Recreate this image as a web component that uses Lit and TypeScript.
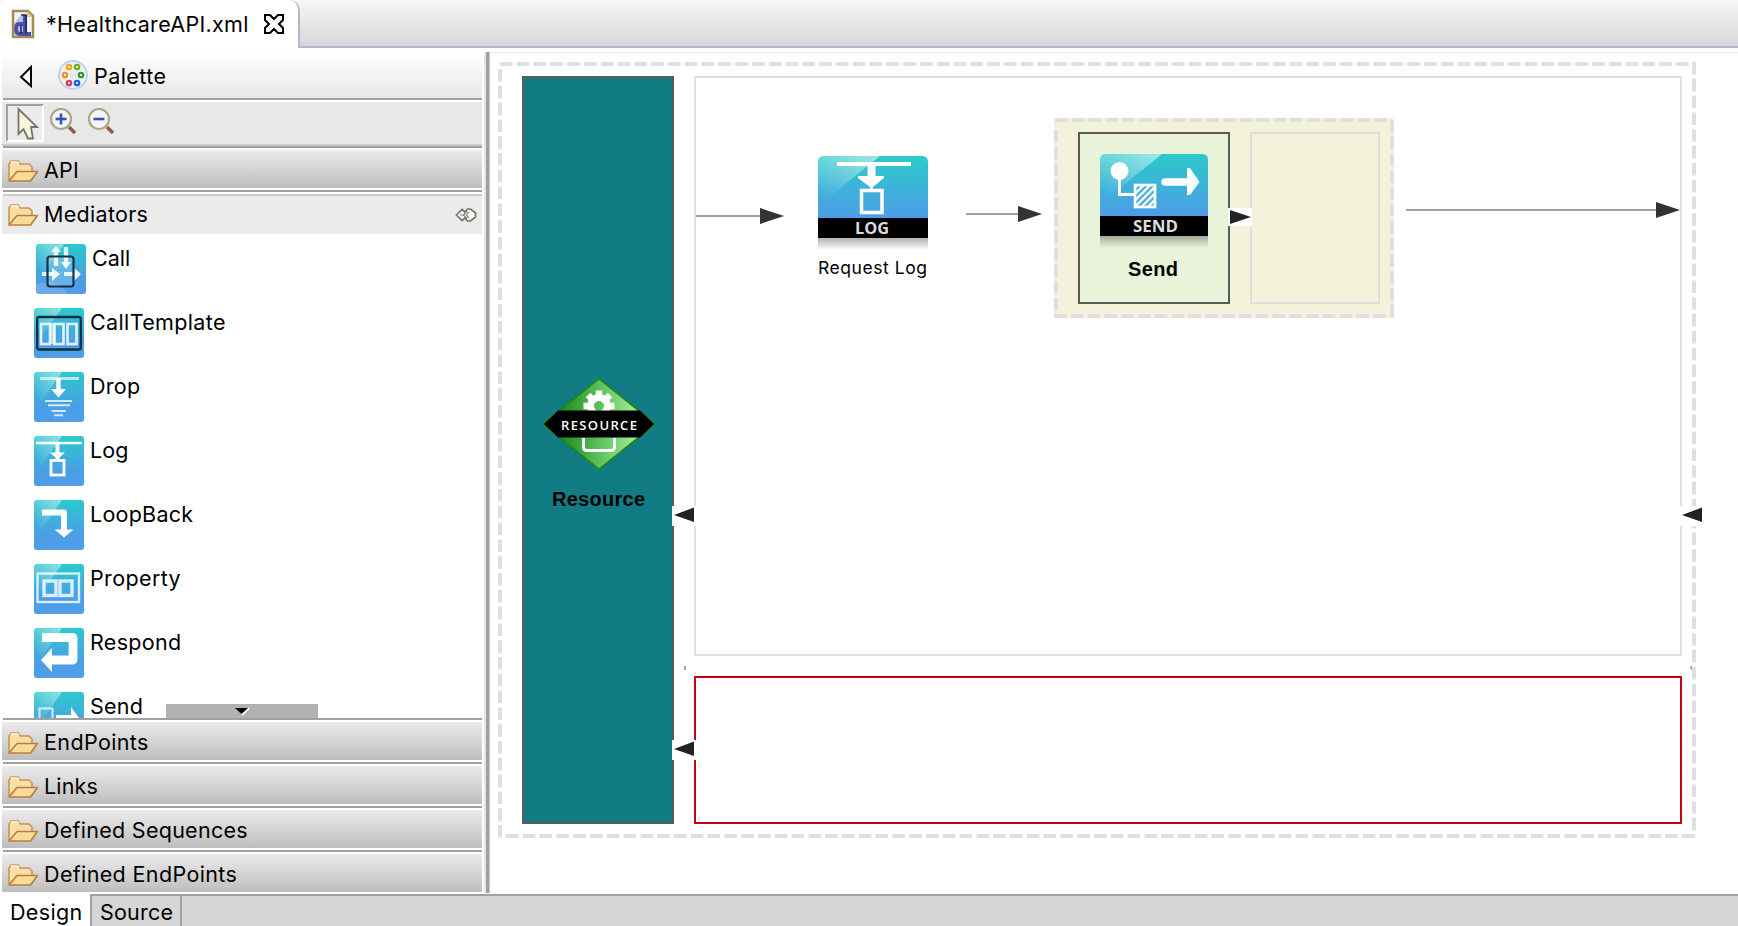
import { LitElement, html, svg, css } from "lit";
import { customElement, property } from "lit/decorators.js";

const tile = (id: string, art: unknown) => svg`
  <defs>
    <linearGradient id="t-${id}" x1="0" y1="0" x2="0" y2="1">
      <stop offset="0" stop-color="#2bc9cb"/><stop offset=".7" stop-color="#4b9ee6"/><stop offset="1" stop-color="#4f9ce8"/>
    </linearGradient>
    <linearGradient id="s-${id}" x1="1" y1="0" x2="0" y2="1">
      <stop offset="0" stop-color="#fff" stop-opacity=".48"/><stop offset=".8" stop-color="#fff" stop-opacity="0"/>
    </linearGradient>
  </defs>
  <rect width="50" height="50" rx="3" fill="url(#t-${id})"/>
  <path d="M3 0H28L2 37H0V3Q0 0 3 0Z" fill="url(#s-${id})"/>
  ${art}`;

const art: Record<string, unknown> = {
  Call: svg`<path d="M0 40Q20 34 32 50H3Q0 50 0 47Z" fill="#fff" opacity=".16"/>
    <g stroke="#fff" fill="none" opacity=".85"><path d="M20 22V7M30 3V20" stroke-width="4.4"/><path d="M6 30H18M28 30H40" stroke-width="3.8"/></g>
    <path d="M15 8L20 2L25 8ZM25 18H35L30 25ZM16 24L24 30L16 37ZM38 24L45 30L38 37Z" fill="#fff" opacity=".9"/>
    <rect x="11.5" y="12.5" width="26" height="30" rx="2.5" fill="#fff" fill-opacity=".18" stroke="#14343f" stroke-width="2.2"/>`,
  CallTemplate: svg`<rect x="3.2" y="9" width="43.6" height="32.5" rx="2" fill="none" stroke="#12333f" stroke-width="2.4"/>
    <path d="M16 15H21V36H16Z" fill="#fff" opacity=".6"/>
    <g fill="none" stroke="#fff" stroke-width="2.6" opacity=".85"><rect x="7" y="16" width="9" height="20"/><rect x="20.5" y="16" width="9" height="20"/><rect x="33.5" y="16" width="9" height="20"/></g>`,
  Drop: svg`<path d="M6 6.5H45" stroke="#fff" stroke-width="2.8" opacity=".65"/><path d="M24.5 6V18" stroke="#fff" stroke-width="4.4"/><path d="M17 17H32L24.5 25.5Z" fill="#fff"/>
    <path d="M11 29H38M14 33.2H36M17.5 39H32M20 43.2H29" stroke="#fff" stroke-width="1.9" opacity=".75"/>`,
  Log: svg`<path d="M2 7H48" stroke="#fff" stroke-width="2.4"/><path d="M23.5 7V24" stroke="#fff" stroke-width="4"/><path d="M16 16.5H31L25 22V24H22V22Z" fill="#fff"/><rect x="17" y="24.5" width="13" height="14.5" fill="none" stroke="#fff" stroke-width="2.8"/>`,
  LoopBack: svg`<path d="M8 12.5H30V31" fill="none" stroke="#fff" stroke-width="5.8" stroke-linejoin="round"/><path d="M20.5 29.5H39.5L30 37.5Z" fill="#fff"/>`,
  Property: svg`<g fill="none" stroke="#fff" stroke-width="2.4" opacity=".8"><rect x="3.5" y="9.5" width="41.5" height="28.5"/><rect x="10" y="17" width="12" height="14.5" stroke-width="3.4"/><rect x="26" y="17" width="12" height="14.5" stroke-width="3.4"/></g>`,
  Respond: svg`<path d="M8 9.5H39V32H16" fill="none" stroke="#fff" stroke-width="8.8" stroke-linejoin="round"/><path d="M7 32L18 20V44Z" fill="#fff"/>`,
  Send: svg`<rect x="5.5" y="16.5" width="13" height="16" fill="none" stroke="#fff" stroke-width="2.2" opacity=".7"/><path d="M22 26H40" stroke="#fff" stroke-width="6"/><path d="M37 15L45 26L37 37Z" fill="#fff"/>`,
};

const folder = html`<svg class="folder" width="32" height="24" viewBox="0 0 32 24">
  <path d="M2 21V5L4 2H11L13 5H22L25 8V12" fill="#f9dea6" stroke="#c99458" stroke-width="1.6"/>
  <path d="M4.5 4.5V3H10.5L12 4.5" fill="none" stroke="#fff4dc" stroke-width="1.5"/>
  <path d="M2 22L10 12.5H30.5L23.5 22Z" fill="#f9dc9a" stroke="#bb8040" stroke-width="1.7" stroke-linejoin="round"/></svg>`;

@customElement("palette-drawer")
class PaletteDrawer extends LitElement {
  @property() label = "";
  @property({ type: Boolean }) open = false;
  @property({ type: Number }) spacing = 0;
  static styles = css`
    :host { display: block; box-sizing: border-box; height: 38px; padding-top: 2px; background: linear-gradient(#ebebeb, #d5d5d5 50%, #bebebe); }
    :host([open]) { padding: 0; background: #ebebeb; }
    .row { display: flex; align-items: center; height: 36px; padding: 0 5px; font: 21.5px/36px Inter, sans-serif; color: #000; }
    .folder { margin: 2px 5px 0 0; }
    .name { flex: 1; white-space: nowrap; }
    .pin { margin-top: 2px; }
  `;
  render() {
    return html`<div class="row">${folder}<span class="name" style="letter-spacing:${this.spacing}px">${this.label}</span>
      ${this.open ? html`<svg class="pin" width="22" height="16" viewBox="0 0 22 16" fill="#fbfbf8" stroke="#77756b" stroke-width="1.7">
        <path d="M1.5 8L7 2.5L10 5L12.5 2H15.5L20.5 6V10L15.5 14H12.5L10 11L7 13.5Z"/><path d="M5 8H9M12 4.5L8.5 8L12 11.5M14 5L11.5 8L14 11" fill="none" stroke-width="1.1"/></svg>` : ""}</div>`;
  }
}

@customElement("palette-panel")
class PalettePanel extends LitElement {
  static styles = css`
    :host { display: flex; flex-direction: column; width: 480px; height: 842px; padding-left: 2px; color: #000; font: 21.5px/26px Inter, sans-serif; }
    .header { display: flex; align-items: center; height: 46px; background: linear-gradient(#fff, #e8e8e8); flex: none; }
    .header .back { margin: 4px 25px 0 17px; }
    .header .wheel { margin-right: 6px; }
    .title { letter-spacing: .45px; margin-top: 1px; }
    .rule { height: 2px; margin: 0 0 2px 1px; background: #a0a0a0; flex: none; }
    .tools { display: flex; height: 42px; background: #e8e8e8; border-bottom: 2px solid #ccc; flex: none; }
    .select { box-sizing: border-box; width: 38px; height: 38px; margin: 2px 5px 0 4px; border: 2px solid #fff; border-top-color: #a0a0a0; border-left-color: #a0a0a0; background: #ebebeb; }
    .zoom { margin: 5px 8px 0 0; }
    .gap { height: 2px; flex: none; }
    .edge { height: 2px; background: #ccc; margin-left: 1px; flex: none; }
    .list { position: relative; height: 484px; overflow: hidden; flex: none; padding-top: 10px; box-sizing: border-box; }
    .item { display: flex; gap: 6px; height: 64px; padding-left: 32px; }
    .item.lead { padding-left: 34px; }
    .item span { margin-top: 1px; }
    .scroll { position: absolute; left: 164px; bottom: 0; width: 152px; height: 14px; background: #b1b1b1; display: flex; justify-content: center; }
  `;
  render() {
    const items: [string, number][] = [["Call", 0], ["CallTemplate", .36], ["Drop", .25], ["Log", .1], ["LoopBack", .25], ["Property", .38], ["Respond", .3], ["Send", .2]];
    const lower: [string, number][] = [["EndPoints", .38], ["Links", .15], ["Defined Sequences", .27], ["Defined EndPoints", .36]];
    const lens = (plus: boolean) => html`<svg class="zoom" width="30" height="30" viewBox="0 0 30 30">
      <path d="M20 20L26 26" stroke="#866049" stroke-width="3.6"/><circle cx="12" cy="12" r="10" fill="#f3f5f9" stroke="#b2a584" stroke-width="2.2"/>
      <path d="M6.500 12H17.500" stroke="#3a52b4" stroke-width="2.6"/>${plus ? svg`<path d="M12 6.500V17.500" stroke="#3a52b4" stroke-width="2.6"/>` : ""}</svg>`;
    return html`
      <div class="header">
        <svg class="back" width="14" height="24" viewBox="0 0 14 24"><path d="M12 2V21L2 12Z" fill="#fff" stroke="#000" stroke-width="2"/></svg>
        <svg class="wheel" width="30" height="30" viewBox="0 0 30 30"><circle cx="15" cy="15" r="14" fill="#edf3fb" stroke="#bfd2e8" stroke-width="2"/>
          <circle cx="15" cy="15" r="4" fill="#e1e9f3"/>
          <g fill="#fff" stroke-width="2.3"><circle cx="11" cy="7" r="2.2" stroke="#f0a51e"/><circle cx="19" cy="7" r="2.2" stroke="#79ae22"/><circle cx="23" cy="15" r="2.2" stroke="#2ca01c"/><circle cx="19" cy="23" r="2.2" stroke="#1c62dc"/><circle cx="11" cy="23" r="2.2" stroke="#d94452"/><circle cx="7" cy="15" r="2.2" stroke="#f3931c"/></g></svg>
        <span class="title">Palette</span>
      </div>
      <div class="rule"></div>
      <div class="tools">
        <div class="select"><svg width="34" height="34" viewBox="0 0 34 34"><path d="M10.5 3V28L15.5 23L20 32.5H25L23 21H29Z" fill="#f8f6dc" stroke="#77756a" stroke-width="1.8"/></svg></div>
        ${lens(true)}${lens(false)}
      </div>
      <div class="rule"></div>
      <palette-drawer label="API" .spacing=${.2}></palette-drawer>
      <div class="gap"></div><div class="rule"></div><div class="edge"></div>
      <palette-drawer open label="Mediators" .spacing=${.3}></palette-drawer>
      <div class="list">
        ${items.map(([n, s], i) => html`<div class="item ${i ? "" : "lead"}"><svg width="50" height="50" viewBox="0 0 50 50">${tile(n, art[n])}</svg><span style="letter-spacing:${s}px">${n}</span></div>`)}
        <div class="scroll"><svg width="16" height="14" viewBox="0 0 16 14"><path d="M15 4L8 11" stroke="#fff" stroke-width="2"/><path d="M1 4H14L7.5 10Z"/></svg></div>
      </div>
      ${lower.map(([n, s], i) => html`${i ? html`<div class="gap"></div>` : ""}<div class="rule"></div><palette-drawer label=${n} .spacing=${s}></palette-drawer>`)}
    `;
  }
}

@customElement("diagram-canvas")
class DiagramCanvas extends LitElement {
  static styles = css`
    :host { display: block; flex: 1; height: 842px; }
    svg { display: block; }
    .caps { font: 700 16px "Open Sans", sans-serif; fill: #dcdcdc; }
    .small { font-size: 13px; font-weight: 600; fill: #fff; }
    .label { font: bold 20px "Liberation Sans", sans-serif; }
    .plain { font: 17.5px Inter, sans-serif; }
    .dash { fill: none; stroke: #dfdfdf; stroke-width: 4; stroke-dasharray: 12.6 4.2; }
    .box { fill: none; stroke: #dfdfdf; stroke-width: 2; }
    .wire { stroke: #a0a0a0; stroke-width: 2; }
  `;
  render() {
    const arrow = (x1: number, x2: number, y: number) => svg`<path class="wire" d="M${x1} ${y}H${x2 - 24}"/><path d="M${x2 - 24} ${y - 8}L${x2} ${y}L${x2 - 24} ${y + 8}Z" fill="#333"/>`;
    const port = (x: number, y: number) => svg`<rect x="${x}" y="${y}" width="24" height="20" fill="#fff"/><path d="M${x + 22} ${y + 1.5}V${y + 16}L${x + 2} ${y + 9}Z" fill="#222"/>`;
    const node = (x: number, y: number, w: number, text: string, tx: number, tw: number, inner: unknown) => svg`
      <rect x="${x}" y="${y + 80}" width="${w}" height="14" fill="url(#shade)"/>
      <path d="M${x} ${y + 64}V${y + 6}Q${x} ${y} ${x + 6} ${y}H${x + w - 6}Q${x + w} ${y} ${x + w} ${y + 6}V${y + 64}Z" fill="url(#blue)"/>
      <path d="M${x + 6} ${y}H${x + 62}L${x + 10} ${y + 42}L${x} ${y + 48}V${y + 6}Q${x} ${y} ${x + 6} ${y}Z" fill="url(#gloss)"/>
      <rect x="${x}" y="${y + 62}" width="${w}" height="20"/>
      <text class="caps" x="${tx}" y="${y + 77.5}" textLength="${tw}" lengthAdjust="spacingAndGlyphs">${text}</text>${inner}`;
    const teeth = [0, 45, 90, 135, 180, 225, 270, 315];
    return html`<svg width="1248" height="842" viewBox="490 52 1248 842">
      <defs>
        <linearGradient id="blue" x1="0" y1="0" x2="0" y2="1"><stop offset="0" stop-color="#2bcaca"/><stop offset="1" stop-color="#4e9be8"/></linearGradient>
        <linearGradient id="gloss" x1=".8" y1="0" x2=".15" y2=".9"><stop offset="0" stop-color="#fff" stop-opacity=".5"/><stop offset="1" stop-color="#fff" stop-opacity="0"/></linearGradient>
        <linearGradient id="shade" x1="0" y1="0" x2="0" y2="1"><stop offset="0" stop-opacity=".35"/><stop offset="1" stop-opacity="0"/></linearGradient>
        <linearGradient id="green"><stop offset=".15" stop-color="#1c8c1d"/><stop offset=".5" stop-color="#5cc05c"/><stop offset=".9" stop-color="#adf59f"/></linearGradient>
        <pattern id="hatch" width="4.6" height="6" patternUnits="userSpaceOnUse" patternTransform="rotate(45)"><rect width="2.4" height="6" fill="#fff"/></pattern>
        <clipPath id="upper"><rect x="560" y="380" width="80" height="31"/></clipPath>
      </defs>
      <rect x="490" y="52" width="1248" height="1" fill="#ececec"/>
      <path class="dash" d="M500 64H1696"/><path class="dash" d="M500 69V838"/><path class="dash" d="M1694 62V836"/><path class="dash" d="M506 836H1696"/>
      <rect x="523" y="77" width="150" height="746" fill="#127c85" stroke="#5a5a5a" stroke-width="2"/>
      <rect class="box" x="695" y="77" width="986" height="578"/>
      <rect x="695" y="677" width="986" height="146" fill="none" stroke="#c9000f" stroke-width="2"/>
      ${arrow(696, 784, 216)}${arrow(966, 1042, 214)}
      <rect x="1054" y="118" width="340" height="200" fill="#f4f2da"/>
      <path class="dash" d="M1055 120H1392M1056 130V318M1392 120V318M1054 316H1390"/>
      <rect class="box" x="1251" y="133" width="128" height="170"/>
      <rect x="1079" y="133" width="150" height="170" fill="#e8f3da" stroke="#5a5a5a" stroke-width="2"/>
      ${arrow(1406, 1680, 210)}
      <rect x="1228" y="208" width="24" height="18" fill="#fff"/><path d="M1230 210V224L1251 217Z" fill="#222"/>
      ${node(818, 156, 110, "LOG", 855, 34, svg`<g stroke="#fff" fill="none"><path d="M837 164H911" stroke-width="4"/><path d="M871.5 165V177" stroke-width="8"/><rect x="861.5" y="190.5" width="20.5" height="22" stroke-width="3.5"/></g><path d="M858 176H884V178L873 187V190H870V187L858 178Z" fill="#fff"/>`)}
      <text class="plain" x="818" y="273.5" textLength="109">Request Log</text>
      ${node(1100, 154, 108, "SEND", 1133, 45, svg`<circle cx="1119.5" cy="171" r="9" fill="#fff"/><path d="M1119.5 178V194.5H1134" fill="none" stroke="#fff" stroke-width="3"/>
        <rect x="1135" y="185" width="20" height="22" fill="url(#hatch)" stroke="#fff" stroke-width="2.6"/><path d="M1165 182H1189" stroke="#fff" stroke-width="7.5" stroke-linecap="round"/><path d="M1187 168L1190 168L1199.5 182L1190 195H1187Z" fill="#fff"/>`)}
      <text class="label" x="1128" y="275.5" textLength="50">Send</text>
      <path d="M599 378.5L653 422V426L599 469.5L545 426V422Z" fill="url(#green)" stroke="#238323" stroke-width="2" stroke-linejoin="round"/>
      <g clip-path="url(#upper)"><circle cx="599" cy="406" r="8.5" fill="none" stroke="#fff" stroke-width="7"/>${teeth.map(a => svg`<rect x="595.8" y="390.5" width="6.4" height="7" fill="#fff" transform="rotate(${a} 599 406)"/>`)}</g>
      <path d="M583.5 438V447Q583.5 450.5 587 450.5H611Q614.5 450.5 614.5 447V438" fill="none" stroke="#fff" stroke-width="3"/>
      <path d="M558 410.5H640L654 424L640 437.5H558L544 424Z"/>
      <text class="caps small" x="561" y="429.5" textLength="76">RESOURCE</text>
      <text class="label" x="552" y="505.5" textLength="93">Resource</text>
      ${port(672, 506)}${port(672, 740)}${port(1680, 506)}
      <path d="M684 666h2v4h-2ZM1690 666h2v5l-2-3Z" fill="#a8a8a8"/>
    </svg>`;
  }
}

@customElement("app-root")
class AppRoot extends LitElement {
  static styles = css`
    :host { display: flex; flex-direction: column; width: 1738px; height: 926px; overflow: hidden; background: #fff; color: #000; font: 21.5px/26px Inter, sans-serif; }
    .tabs { display: flex; height: 52px; flex: none; }
    .tab { box-sizing: border-box; display: flex; width: 300px; height: 48px; padding: 9px 0 0 11px; background: #fff; border-right: 2px solid #b5b8cc; border-radius: 8px 10px 0 0; }
    .strip { display: flex; width: 100%; height: 48px; background: linear-gradient(#f6f6f6, #d6d6d6); }
    .filler { flex: 1; height: 46px; border-bottom: 2px solid #b5b8cc; }
    .file { margin: 2px 16px 0 11px; letter-spacing: .3px; width: 201px; white-space: nowrap; }
    .close { margin-top: 4px; }
    .main { display: flex; height: 842px; flex: none; }
    .sash { width: 2px; height: 841px; margin-left: 2px; background: #e6e6e6; border-right: 3px solid #a0a0a0; box-shadow: 1px 0 #c8c8c8; margin-right: 1px; }
    .views { display: flex; height: 32px; }
    .view { box-sizing: border-box; height: 32px; padding-top: 3px; border-top: 2px solid #a0a0a0; background: #d6d6d6; border-right: 2px solid #a0a0a0; letter-spacing: .2px; }
    .view.design { width: 92px; padding: 5px 0 0 10px; border-top: 0; background: #fff; letter-spacing: .35px; }
    .view.source { width: 90px; padding-left: 8px; }
    .rest { flex: 1; border-top: 2px solid #a0a0a0; background: #d6d6d6; }
  `;
  render() {
    return html`
      <div class="tabs"><div class="strip">
        <div class="tab">
          <svg width="24" height="30" viewBox="0 0 24 30"><path d="M2 2H17L22 7V28H2Z" fill="#f5f4f6" stroke="#a58b50" stroke-width="2.5"/><path d="M16 2V8H22Z" fill="#e7c887"/><path d="M3 15L8 8L13 5V27H3Z" fill="#bac0df"/><path d="M14 6V25M14 15H8Q5 15 5 20Q5 25 9 25H20" fill="none" stroke="#4b50ad" stroke-width="4"/><path d="M10 6H15V25M10 16V25" fill="none" stroke="#1d2458" stroke-width="1.5"/></svg>
          <span class="file">*HealthcareAPI.xml</span>
          <svg class="close" width="22" height="22" viewBox="0 0 22 22"><path d="M2 2H7L11 6L15 2H20V7L16 11L20 15V20H15L11 16L7 20H2V15L6 11L2 7Z" fill="#fff" stroke="#000" stroke-width="2"/></svg>
        </div><div class="filler"></div></div></div>
      <div class="main"><palette-panel></palette-panel><div class="sash"></div><diagram-canvas></diagram-canvas></div>
      <div class="views"><div class="view design">Design</div><div class="view source">Source</div><div class="rest"></div></div>
    `;
  }
}
